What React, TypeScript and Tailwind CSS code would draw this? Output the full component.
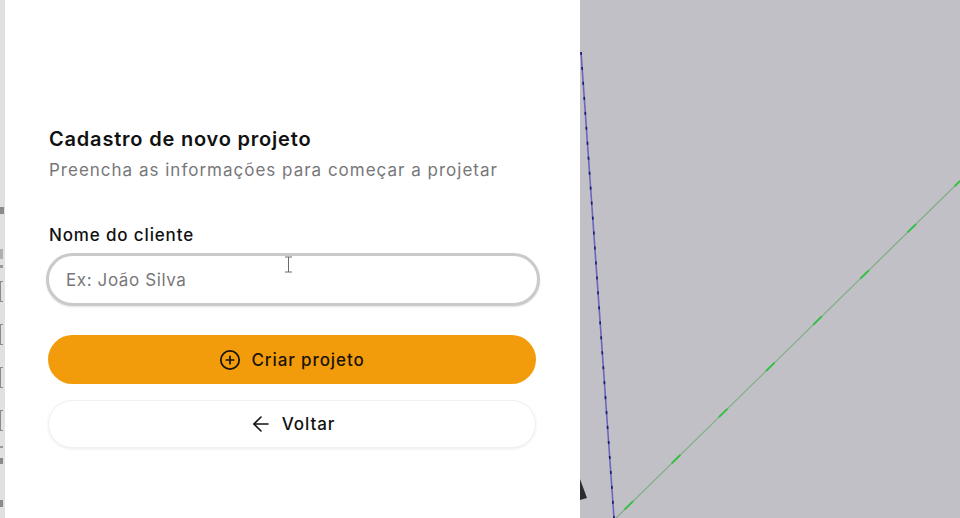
import { ArrowLeft, CirclePlus } from "lucide-react";

// viewport lines drawn behind the form
function Viewport() {
  return (
    <div className="flex-1 h-full bg-[#c0c0c6]">
      <svg width="380" height="518" viewBox="0 0 380 518" fill="none">
        <path d="M1 52 L34 518" stroke="#6a66bc" strokeWidth="1.6" />
        <path d="M1 52 L34 518" stroke="#1c1a70" strokeWidth="1.6" strokeDasharray="3 12" />
        <path d="M36 518 L380 181" stroke="#7fae82" strokeWidth="1.2" />
        <path d="M36 518 L380 181" stroke="#2fc03f" strokeWidth="1.8" strokeDasharray="12 54" strokeDashoffset="-12" />
        <path d="M0 479 L7 498 L0 500 Z" fill="#2c2c30" />
      </svg>
    </div>
  );
}

function ToolStrip() {
  return (
    <div className="w-[5px] h-full bg-[#e0e0e0] flex flex-col items-start pt-[207px]">
      <div className="w-[4px] h-[7px] bg-[#8a8a8e]" />
      <div className="w-[3px] h-[10px] mt-[35px] bg-[#b0b0b3]" />
      <div className="w-[3px] h-[3px] mt-[6px] bg-[#9a9a9e]" />
      <div className="w-[3px] h-[21px] mt-[13px] border-l border-y border-[#8a8a8e]" />
      <div className="w-[3px] h-[21px] mt-[22px] border-l border-y border-[#8a8a8e]" />
      <div className="w-[3px] h-[21px] mt-[22px] border-l border-y border-[#8a8a8e]" />
      <div className="w-[3px] h-[21px] mt-[22px] border-l border-y border-[#8a8a8e]" />
      <div className="w-[3px] h-[2px] mt-[15px] bg-[#9a9a9e]" />
      <div className="w-[3px] h-[6px] mt-[10px] bg-[#8a8a8e]" />
      <div className="w-[3px] h-[7px] mt-[36px] bg-[#8a8a8e]" />
    </div>
  );
}

export default function App() {
  return (
    <div className="w-[960px] h-[518px] flex overflow-hidden bg-white font-['Inter',sans-serif]">
      <ToolStrip />
      <div className="w-[575px] h-full bg-white pl-[43px] pr-[44px] pt-[128px] relative">
        <h1 className="ml-[1px] text-[20px] leading-[22px] font-semibold text-[#111111] tracking-[0.8px]">
          Cadastro de novo projeto
        </h1>
        <p className="ml-[1px] mt-[10px] text-[17px] leading-[20px] text-[#77777a] tracking-[1px]">
          Preencha as informações para começar a projetar
        </p>

        <label className="ml-[1px] block mt-[45px] text-[17px] leading-[20px] font-medium text-[#111111] tracking-[0.85px]">
          Nome do cliente
        </label>
        <input
          type="text"
          placeholder="Ex: João Silva"
          className="block mt-[8px] -ml-[2px] w-[494px] h-[53px] rounded-full bg-white border-[3px] border-[#cacaca] pl-[17px] text-[17px] tracking-[0.6px] outline-none placeholder:text-[#77777a] shadow-[0_1px_2px_rgba(0,0,0,0.12)]"
        />

        <button className="mt-[29px] w-full h-[49px] rounded-full bg-[#f39c0b] flex items-center justify-center gap-[10px] text-[17px] font-medium text-[#1a1408] tracking-[0.9px]">
          <CirclePlus size={22} strokeWidth={1.9} />
          <span className="pt-[2px]">Criar projeto</span>
        </button>
        <button className="mt-[16px] w-full h-[48px] rounded-full bg-white border border-[#f1f1f1] shadow-[0_1px_3px_rgba(0,0,0,0.08)] flex items-center justify-center gap-[9px] text-[17px] font-medium text-[#111111] tracking-[0.9px]">
          <ArrowLeft size={24} strokeWidth={1.6} />
          <span className="pt-[2px]">Voltar</span>
        </button>

        {/* text cursor over the input */}
        <svg className="absolute left-[279px] top-[256px]" width="9" height="17" viewBox="0 0 9 17" fill="none" stroke="#6a6a70" strokeWidth="1">
          <path d="M1 1 H8 M4.5 1 V16 M1 16 H8" />
        </svg>
      </div>
      <Viewport />
    </div>
  );
}
